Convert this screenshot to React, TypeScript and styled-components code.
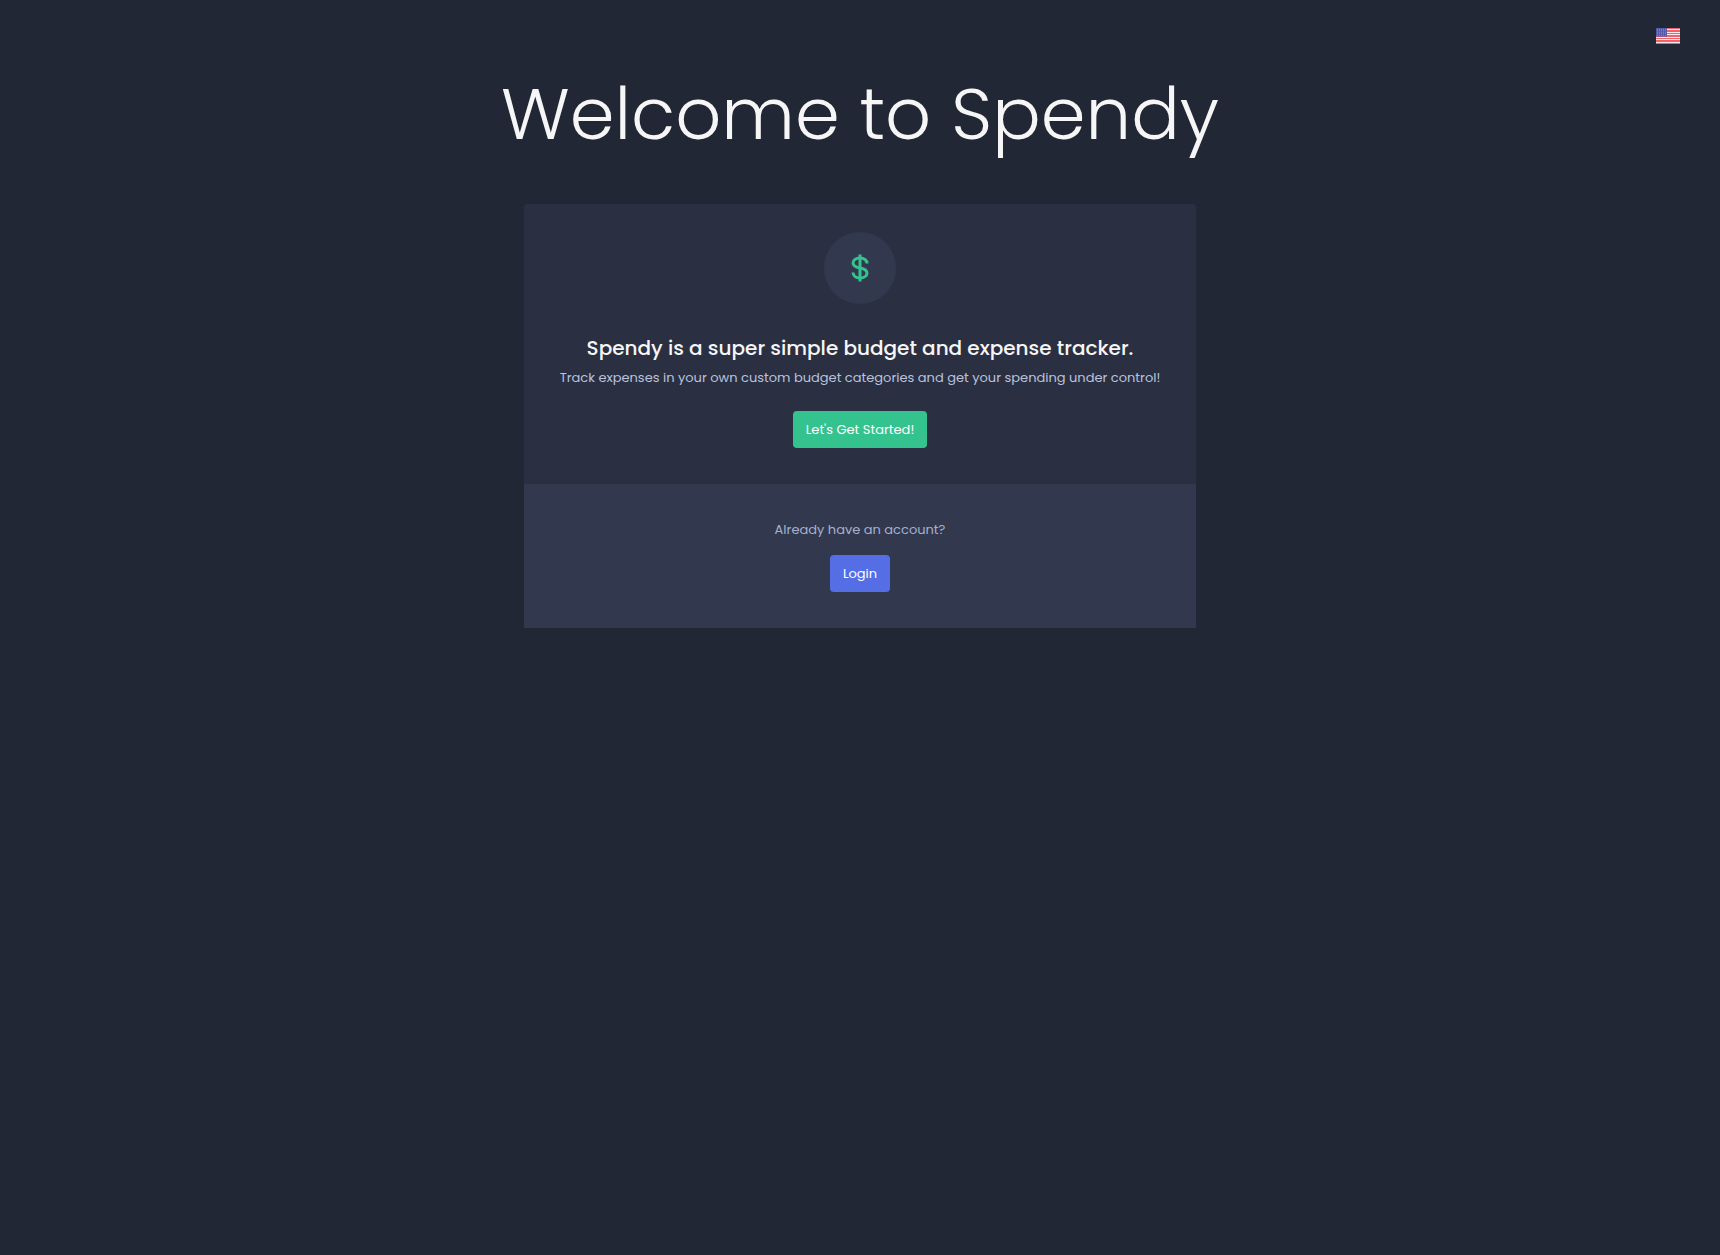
import React from "react";
import styled, { createGlobalStyle } from "styled-components";

const GlobalStyle = createGlobalStyle`
  *, *::before, *::after { box-sizing: border-box; }
  body {
    margin: 0;
    background: #222736;
    color: #a6b0cf;
    font-family: Poppins, Inter, "Open Sans", sans-serif;
    font-size: 13px;
    line-height: 20px;
  }
`;

const Page = styled.div`
  min-height: 100vh;
  display: flex;
  flex-direction: column;
`;

const TopBar = styled.header`
  display: flex;
  justify-content: flex-end;
  padding: 28px 40px 0;
`;

const LanguageButton = styled.button`
  display: flex;
  padding: 0;
  border: 0;
  background: none;
  cursor: pointer;
`;

const Main = styled.main`
  display: flex;
  flex-direction: column;
  align-items: center;
  gap: 46px;
  padding: 26px 24px;
`;

const Title = styled.h1`
  margin: 0;
  color: #f6f6f6;
  font-size: 72px;
  font-weight: 300;
  line-height: 88px;
  text-align: center;
`;

const Card = styled.section`
  width: 100%;
  max-width: 672px;
  border-radius: 4px 4px 0 0;
  background: #2a3042;
  text-align: center;
`;

const Intro = styled.div`
  display: flex;
  flex-direction: column;
  align-items: center;
  padding: 28px 20px 36px;
`;

const Badge = styled.div`
  display: grid;
  place-items: center;
  width: 72px;
  height: 72px;
  margin-bottom: 32px;
  border-radius: 50%;
  background: #32394e;
`;

const Heading = styled.h2`
  margin: 0 0 8px;
  color: #f6f6f6;
  font-size: 20px;
  font-weight: 500;
  line-height: 24px;
`;

const Lead = styled.p`
  margin: 0 0 23px;
  color: #bac2de;
`;

const Footer = styled.footer`
  display: flex;
  flex-direction: column;
  align-items: center;
  gap: 15px;
  padding: 36px 20px;
  background: #32394e;
`;

const Note = styled.p`
  margin: 0;
`;

const Button = styled.button<{ $color: string }>`
  height: 37px;
  padding: 0 13px;
  border: 0;
  border-radius: 4px;
  background: ${(p) => p.$color};
  color: #fff;
  font: inherit;
  cursor: pointer;
`;

const stripes = [0, 2, 4, 6, 8, 10, 12];
const stars = [0, 1, 2, 3, 4];

function UsFlag() {
  return (
    <svg width="24" height="16" viewBox="0 0 24 16" aria-hidden="true">
      <rect width="24" height="16" fill="#fbe9eb" />
      <g fill="#f2606a" shapeRendering="crispEdges">
        {stripes.map((n) => (
          <rect key={n} y={(n * 16) / 13} width="24" height={16 / 13} />
        ))}
      </g>
      <rect width="11" height="8.6" fill="#5459a5" />
      {stars.map((row) =>
        stars.map((col) => (
          <circle key={`${row}-${col}`} cx={1.5 + col * 2} cy={1.3 + row * 1.5} r="0.5" fill="#8f93ca" />
        )),
      )}
    </svg>
  );
}

function Dollar() {
  return (
    <svg width="36" height="36" viewBox="0 0 36 36" fill="none" stroke="#34c38f" strokeWidth="3" aria-hidden="true">
      <path d="M18 4.5v27" />
      <path d="M25 13.4c0-3.2-3-5.4-7-5.4s-7 2-7 5 2.6 4.2 7 5 7 2 7 5-3 5-7 5-7-2.2-7-5.4" />
    </svg>
  );
}

export default function App() {
  return (
    <>
      <GlobalStyle />
      <Page>
        <TopBar>
          <LanguageButton type="button" aria-label="English">
            <UsFlag />
          </LanguageButton>
        </TopBar>
        <Main>
          <Title>Welcome to Spendy</Title>
          <Card>
            <Intro>
              <Badge>
                <Dollar />
              </Badge>
              <Heading>Spendy is a super simple budget and expense tracker.</Heading>
              <Lead>Track expenses in your own custom budget categories and get your spending under control!</Lead>
              <Button type="button" $color="#34c38f">Let's Get Started!</Button>
            </Intro>
            <Footer>
              <Note>Already have an account?</Note>
              <Button type="button" $color="#556ee6">Login</Button>
            </Footer>
          </Card>
        </Main>
      </Page>
    </>
  );
}
